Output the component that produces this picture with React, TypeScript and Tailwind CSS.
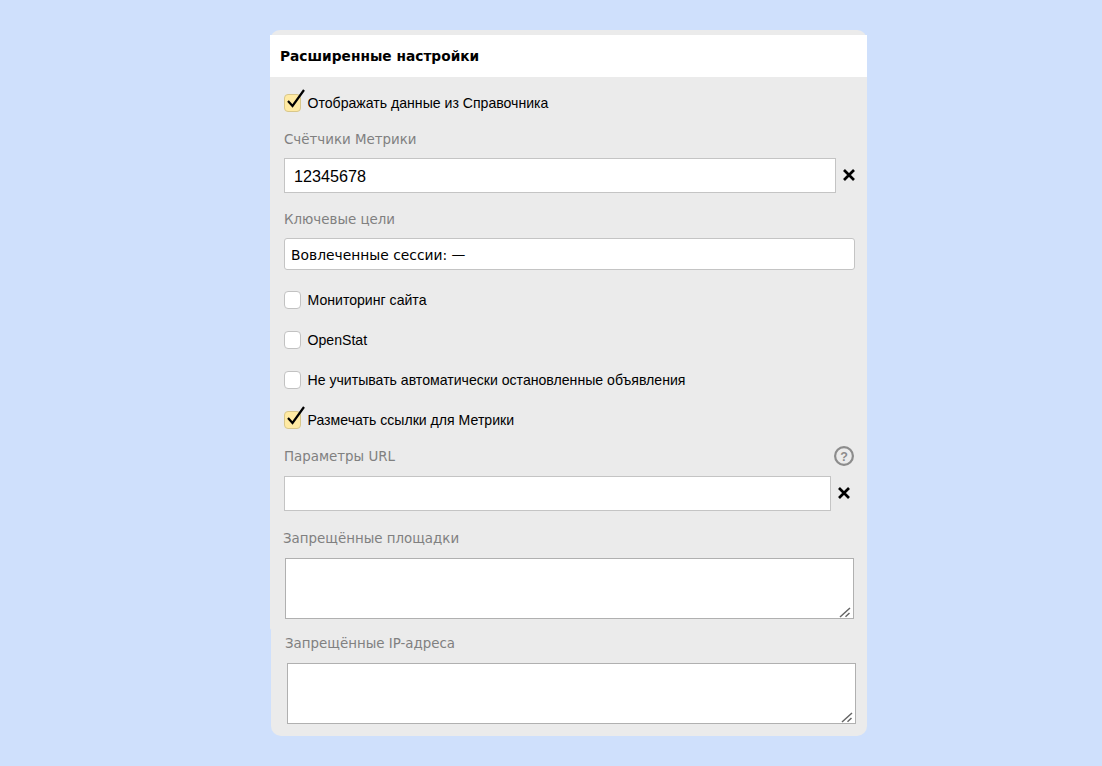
import React from 'react';

const sans = "font-['Liberation_Sans',Arial,sans-serif]";
const dejavu = "font-['DejaVu_Sans',Verdana,sans-serif]";

const Checkbox: React.FC<{ checked?: boolean; label: string; className?: string }> = ({ checked, label, className }) => (
  <div className={`flex items-center h-[18px] ${className ?? ''}`}>
    <span
      className={`relative w-[17px] h-[18px] shrink-0 rounded-[4px] border ${
        checked ? 'bg-[#ffeaa3] border-[#d8c78b]' : 'bg-white border-[#c2c2c2]'
      }`}
    >
      {checked && (
        <svg className="absolute left-[1px] top-[-6px]" width="20" height="22" viewBox="0 0 20 22" fill="none">
          <path d="M2 12 L6.5 17 L18 1" stroke="#000" strokeWidth="2.2" />
        </svg>
      )}
    </span>
    <span className={`ml-[6.5px] text-[14.1px] leading-[18px] text-black ${sans}`}>{label}</span>
  </div>
);

const Label: React.FC<{ text: string; className?: string }> = ({ text, className }) => (
  <div className={`h-[18px] text-[13.4px] leading-[20px] text-[#808080] ${dejavu} ${className ?? ''}`}>{text}</div>
);

const Cross: React.FC = () => (
  <svg width="12" height="12" viewBox="0 0 12 12" fill="none" className="block shrink-0 mb-[1px]">
    <path d="M1 1 L11 11 M11 1 L1 11" stroke="#000" strokeWidth="2.7" />
  </svg>
);

const Area: React.FC<{ className?: string }> = ({ className }) => (
  <div className={`relative w-[569px] h-[61px] ${className ?? ''}`}>
    <textarea readOnly className="block w-full h-full resize-none bg-white border border-[#b0b0b0] outline-none" />
    <svg className="absolute right-0 bottom-0" width="16" height="13" viewBox="0 0 16 13" fill="none">
      <path d="M2 11 L12 2 M7.5 10.7 L11.5 7" stroke="#666" strokeWidth="1.5" />
    </svg>
  </div>
);

const App: React.FC = () => {
  return (
    <div className="min-h-[766px] bg-[#cfe0fc] pt-[30px] pb-[30px]">
      <div className="ml-[270px] w-[597px]">
        <div className="h-[600px] rounded-t-[10px] rounded-bl-[2px] bg-[#ebebeb] pt-[5px]">
          <div className={`h-[42px] bg-white pl-[10px] flex items-center text-[13.75px] font-bold text-black ${dejavu}`}>
            Расширенные настройки
          </div>

          <div className="pl-[14px] pr-[12px]">
            <Checkbox checked label="Отображать данные из Справочника" className="mt-[17px]" />
            <Label text="Счётчики Метрики" className="mt-[18px]" />
            <div className="mt-[10px] flex items-center">
              <input
                readOnly
                value="12345678"
                className={`w-[552px] h-[35px] bg-white border border-[#c4c4c4] px-[9px] pt-[2px] text-[16.2px] text-black outline-none ${sans}`}
              />
              <span className="ml-[7px]"><Cross /></span>
            </div>
            <Label text="Ключевые цели" className="mt-[17px]" />
            <div className={`mt-[10px] w-[571px] h-[32px] bg-white border border-[#c4c4c4] rounded-[3px] px-[6px] pt-[2px] flex items-center text-[13.85px] text-black ${dejavu}`}>
              Вовлеченные сессии: —
            </div>
            <Checkbox label="Мониторинг сайта" className="mt-[21px]" />
            <Checkbox label="OpenStat" className="mt-[22px]" />
            <Checkbox label="Не учитывать автоматически остановленные объявления" className="mt-[22px]" />
            <Checkbox checked label="Размечать ссылки для Метрики" className="mt-[22px]" />
            <div className="mt-[17px] flex items-center justify-between pr-[1px] w-[571px]">
              <Label text="Параметры URL" />
              <svg width="20" height="20" viewBox="0 0 20 20" fill="none">
                <circle cx="10" cy="10" r="8.9" stroke="#8c8c8c" strokeWidth="2.2" />
                <text x="10" y="14.5" textAnchor="middle" fontSize="12.5" fontWeight="700" fill="#8c8c8c" fontFamily="Liberation Sans, sans-serif">?</text>
              </svg>
            </div>
            <div className="mt-[10px] flex items-center">
              <input readOnly className="w-[547px] h-[35px] bg-white border border-[#c4c4c4] outline-none" />
              <span className="ml-[7px]"><Cross /></span>
            </div>
            <Label text="Запрещённые площадки" className="mt-[18px] -ml-px" />
            <Area className="mt-[11px] ml-px" />
          </div>
        </div>

        <div className="ml-px h-[106px] rounded-b-[10px] bg-[#ebebeb] pl-[13px] pr-[12px] pt-[4px]">
          <Label text="Запрещённые IP-адреса" className="ml-px" />
          <Area className="mt-[11px] ml-[3px]" />
        </div>
      </div>
    </div>
  );
};

export default App;
